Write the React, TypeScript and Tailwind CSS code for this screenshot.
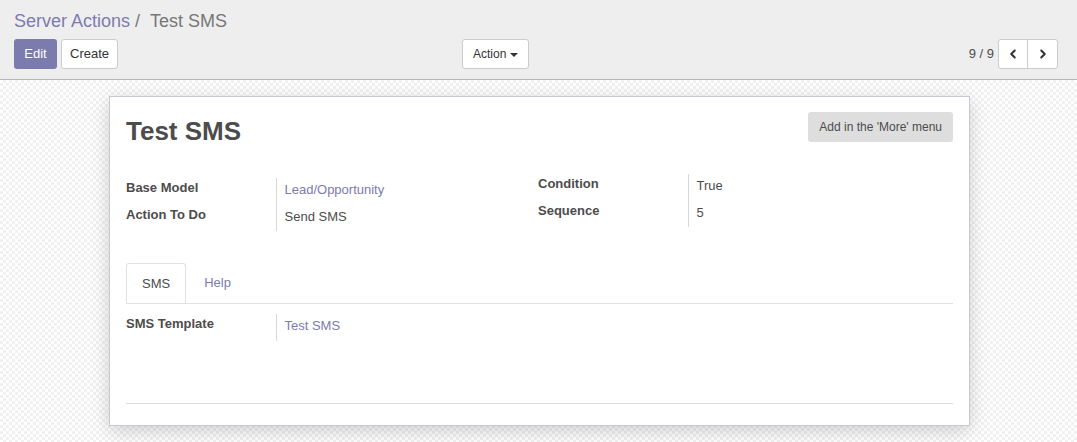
import { ChevronLeft, ChevronRight } from "lucide-react"

function Field({ label, value, link }: { label: string; value: string; link?: boolean }) {
  return (
    <tr>
      <td className="w-[150px] pr-[8px] pb-[5px] align-top font-bold text-[#4c4c4c]">{label}</td>
      <td className="border-l border-[#d9d7d7] pl-[8px] pb-[5px] align-top pt-[2px]">
        <span className={link ? "text-[#7c7bad]" : "text-[#4c4c4c]"}>{value}</span>
      </td>
    </tr>
  )
}

export default function App() {
  return (
    <div className="font-['Liberation_Sans',Arial,sans-serif] text-[13px] text-[#4c4c4c] h-[442px] w-[1077px] flex flex-col overflow-hidden">
      <div className="bg-[#efeeef] border-b border-[#b5b5b5] h-[80px] pl-[14px] pr-[19px] pt-[9px]">
        <div className="text-[18px] leading-[24px] flex">
          <span className="text-[#7c7bad]">Server Actions</span>
          <span className="text-[#777] ml-[5px]">/</span>
          <span className="text-[#777] ml-[10px]">Test SMS</span>
        </div>
        <div className="flex items-center mt-[6px]">
          <div className="flex gap-[4px] w-[448px]">
            <button className="h-[30px] px-[10px] w-[43px] rounded-[3px] bg-[#7c7bad] text-white text-[13px]">Edit</button>
            <button className="h-[30px] px-[8px] rounded-[3px] bg-white border border-[#ccc] text-[#333] text-[13px]">Create</button>
          </div>
          <button className="h-[30px] px-[10px] rounded-[3px] bg-white border border-[#ccc] text-[#333] text-[12px] flex items-center gap-[4px]">
            Action
            <span className="border-x-[4px] border-x-transparent border-t-[4px] border-t-[#333] mt-[1px]" />
          </button>
          <div className="flex-1 flex justify-end items-center">
            <span className="text-[#4c4c4c] text-[13px] mr-[4px]">9 / 9</span>
            <div className="flex h-[30px] bg-white border border-[#ccc] rounded-[3px]">
              <button className="w-[29px] flex items-center justify-center border-r border-[#ccc]">
                <ChevronLeft size={14} strokeWidth={3.5} className="text-[#333]" />
              </button>
              <button className="w-[29px] flex items-center justify-center">
                <ChevronRight size={14} strokeWidth={3.5} className="text-[#333]" />
              </button>
            </div>
          </div>
        </div>
      </div>
      <div className="flex-1 bg-[repeating-conic-gradient(#f1f1f1_0_25%,#ffffff_0_50%)] bg-size-[6px_6px] pt-[16px]">
        <div className="ml-[109px] w-[861px] bg-white border border-[#c9c8d2] shadow-[0_5px_18px_rgba(0,0,0,0.18)] px-[16px] pt-[16px] pb-[21px]">
          <div className="flex justify-between items-start">
            <h1 className="text-[26px] font-bold leading-[36px] text-[#4c4c4c]">Test SMS</h1>
            <button className="h-[30px] px-[11px] rounded-[3px] bg-[#dedede] text-[#4c4c4c] text-[12px] -mt-px">Add in the 'More' menu</button>
          </div>
          <div className="flex mt-[29px]">
            <table className="w-[412px] border-collapse">
              <tbody>
                <Field label="Base Model" value="Lead/Opportunity" link />
                <Field label="Action To Do" value="Send SMS" />
              </tbody>
            </table>
            <table className="border-collapse -mt-[4px] h-fit">
              <tbody>
                <Field label="Condition" value="True" />
                <Field label="Sequence" value="5" />
              </tbody>
            </table>
          </div>
          <div className="mt-[32px] border-b border-[#dee2e6] flex">
            <div className="h-[40px] px-[15px] flex items-center border border-b-0 border-[#dee2e6] rounded-t-[3px] text-[#4c4c4c] bg-white -mb-px">SMS</div>
            <div className="h-[40px] px-[18px] flex items-center text-[#7c7bad]">Help</div>
          </div>
          <table className="border-collapse mt-[10px]">
            <tbody>
              <Field label="SMS Template" value="Test SMS" link />
            </tbody>
          </table>
          <div className="border-t border-[#dedede] mt-[62px]" />
        </div>
      </div>
    </div>
  )
}
